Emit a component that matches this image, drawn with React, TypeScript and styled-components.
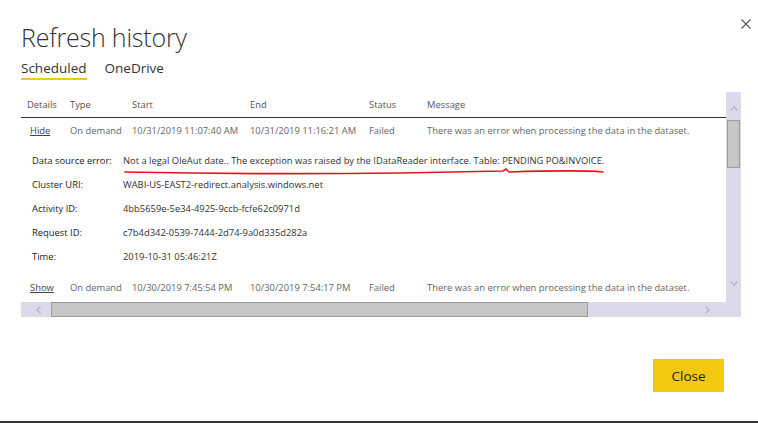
import React from "react"
import styled, { createGlobalStyle } from "styled-components"

const GlobalStyle = createGlobalStyle`
    html, body {
        margin: 0;
        padding: 0;
        background: #ffffff;
    }
    body {
        font-family: "Open Sans", "Noto Sans", sans-serif;
        color: #333333;
    }
`

const Dialog = styled.div`
    position: relative;
    width: 758px;
    height: 423px;
    box-sizing: border-box;
    border-bottom: 2px solid #333333;
    display: flex;
    flex-direction: column;
`

const Header = styled.div`
    display: flex;
    justify-content: space-between;
    align-items: flex-start;
    padding: 18px 6px 0 21px;
`

const Title = styled.h1`
    margin: 0;
    font-family: "Open Sans", "Noto Sans", sans-serif;
    font-weight: 300;
    font-size: 25px;
    line-height: 38px;
    color: #333333;
    letter-spacing: -0.2px;
`

const CloseX = styled.button`
    border: 0;
    background: none;
    padding: 0;
    width: 10px;
    height: 10px;
    margin: 1px 1px 0 0;
    display: flex;
    cursor: pointer;
`

const Tabs = styled.div`
    display: flex;
    gap: 18px;
    padding: 3px 0 0 21px;
`

const Tab = styled.div<{ $active?: boolean }>`
    font-size: 13.5px;
    line-height: 18px;
    color: #333333;
    padding-bottom: 1px;
    border-bottom: 2px solid ${(p) => (p.$active ? "#f2c811" : "transparent")};
`

const ScrollFrame = styled.div`
    margin: 12px 0 0 21px;
    width: 720px;
    height: 225px;
    background: #dadaea;
    display: grid;
    grid-template-columns: 705px 15px;
    grid-template-rows: 210px 15px;
`

const Viewport = styled.div`
    position: relative;
    background: #ffffff;
    overflow: hidden;
`

const VScroll = styled.div`
    display: flex;
    flex-direction: column;
    align-items: center;
    padding-top: 12px;
`

const VThumb = styled.div`
    width: 13px;
    height: 48px;
    margin-top: 6px;
    background: #c6c6c6;
    border: 1px solid #9c9c9c;
    box-sizing: border-box;
`

const VDown = styled.div`
    margin-top: auto;
    margin-bottom: 14px;
    display: flex;
`

const HScroll = styled.div`
    display: flex;
    align-items: center;
    padding-left: 13px;
`

const HThumb = styled.div`
    width: 537px;
    height: 15px;
    margin-left: 7px;
    background: #c6c6c6;
    border: 1px solid #9c9c9c;
    box-sizing: border-box;
`

const HRight = styled.div`
    margin-left: auto;
    margin-right: 14px;
    display: flex;
`

const columns = "43px 62px 118px 119px 58px 1fr"

const HeadRow = styled.div`
    display: grid;
    grid-template-columns: ${columns};
    padding-left: 6px;
    height: 25px;
    align-items: center;
    border-bottom: 1px solid #333333;
    font-size: 9.4px;
    color: #555555;
`

const Row = styled.div`
    display: grid;
    grid-template-columns: ${columns};
    padding-left: 6px;
    height: 25px;
    align-items: center;
    font-size: 9.4px;
    color: #666666;
    white-space: nowrap;
`

const Toggle = styled.a`
    color: #444444;
    text-decoration: underline;
    padding-left: 3px;
    cursor: pointer;
`

const Details = styled.div`
    display: grid;
    grid-template-columns: 91px 1fr;
    grid-auto-rows: 24px;
    align-items: center;
    padding: 5px 0 7px 11px;
    font-size: 9.4px;
    white-space: nowrap;
`

const Label = styled.div`
    color: #222222;
`

const Value = styled.div`
    color: #333333;
`

const Scribble = styled.svg`
    position: absolute;
    left: 0;
    top: 0;
    pointer-events: none;
`

const Footer = styled.div`
    margin-top: auto;
    display: flex;
    justify-content: flex-end;
    padding: 0 34px 29px 0;
`

const CloseButton = styled.button`
    width: 71px;
    height: 33px;
    border: 0;
    background: #f2c811;
    color: #222222;
    font-family: "Open Sans", "Noto Sans", sans-serif;
    font-size: 13.5px;
    cursor: pointer;
`

const Chevron: React.FC<{ dir: "up" | "down" | "left" | "right" }> = ({ dir }) => {
    const rot = { up: 0, right: 90, down: 180, left: 270 }[dir]
    return (
        <svg width="10" height="10" viewBox="0 0 10 10">
            <path
                d="M1.5 6.5 L5 3 L8.5 6.5"
                fill="none"
                stroke="#b9b9c6"
                strokeWidth="1.6"
                transform={`rotate(${rot} 5 5)`}
            />
        </svg>
    )
}

const details = [
    {
        label: "Data source error:",
        value: "Not a legal OleAut date.. The exception was raised by the IDataReader interface. Table: PENDING PO&INVOICE.",
    },
    { label: "Cluster URI:", value: "WABI-US-EAST2-redirect.analysis.windows.net" },
    { label: "Activity ID:", value: "4bb5659e-5e34-4925-9ccb-fcfe62c0971d" },
    { label: "Request ID:", value: "c7b4d342-0539-7444-2d74-9a0d335d282a" },
    { label: "Time:", value: "2019-10-31 05:46:21Z" },
]

const message = "There was an error when processing the data in the dataset."

export default function App() {
    return (
        <>
            <GlobalStyle />
            <Dialog>
                <Header>
                    <Title>Refresh history</Title>
                    <CloseX aria-label="Close">
                        <svg width="10" height="10" viewBox="0 0 10 10">
                            <path d="M0.5 0.5 L9.5 9.5 M9.5 0.5 L0.5 9.5" stroke="#555" strokeWidth="1.1" />
                        </svg>
                    </CloseX>
                </Header>
                <Tabs>
                    <Tab $active>Scheduled</Tab>
                    <Tab>OneDrive</Tab>
                </Tabs>
                <ScrollFrame>
                    <Viewport>
                        <HeadRow>
                            <span>Details</span>
                            <span>Type</span>
                            <span>Start</span>
                            <span>End</span>
                            <span>Status</span>
                            <span>Message</span>
                        </HeadRow>
                        <Row>
                            <Toggle>Hide</Toggle>
                            <span>On demand</span>
                            <span>10/31/2019 11:07:40 AM</span>
                            <span>10/31/2019 11:16:21 AM</span>
                            <span>Failed</span>
                            <span>{message}</span>
                        </Row>
                        <Details>
                            {details.map((d) => (
                                <React.Fragment key={d.label}>
                                    <Label>{d.label}</Label>
                                    <Value>{d.value}</Value>
                                </React.Fragment>
                            ))}
                        </Details>
                        <Row>
                            <Toggle>Show</Toggle>
                            <span>On demand</span>
                            <span>10/30/2019 7:45:54 PM</span>
                            <span>10/30/2019 7:54:17 PM</span>
                            <span>Failed</span>
                            <span>{message}</span>
                        </Row>
                        <Scribble width="705" height="210">
                            <path
                                d="M104 80 C 200 82, 300 82, 380 81 C 430 80, 470 79, 482 79 L 485 77 L 488 80 C 520 79, 560 78, 582 80"
                                fill="none"
                                stroke="#e8141a"
                                strokeWidth="1.7"
                                strokeLinecap="round"
                            />
                        </Scribble>
                    </Viewport>
                    <VScroll>
                        <Chevron dir="up" />
                        <VThumb />
                        <VDown>
                            <Chevron dir="down" />
                        </VDown>
                    </VScroll>
                    <HScroll>
                        <Chevron dir="left" />
                        <HThumb />
                        <HRight>
                            <Chevron dir="right" />
                        </HRight>
                    </HScroll>
                    <div />
                </ScrollFrame>
                <Footer>
                    <CloseButton>Close</CloseButton>
                </Footer>
            </Dialog>
        </>
    )
}
